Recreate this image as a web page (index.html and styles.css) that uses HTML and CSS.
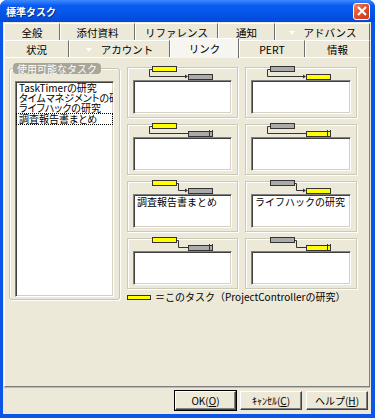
FILE: index.html
```html
<!DOCTYPE html>
<html lang="ja">
<head>
    <meta charset="UTF-8">
    <title>標準タスク</title>
    <link rel="stylesheet" href="styles.css">
</head>
<body>
<div class="window">
    <div class="titlebar">
        <span class="title">標準タスク</span>
        <span class="close-btn">
            <svg width="12" height="12" viewBox="0 0 12 12"><path d="M2 2 L10 10 M10 2 L2 10" stroke="#fff" stroke-width="2.2"/></svg>
        </span>
    </div>
    <div class="client">
        <div class="tabs">
            <div class="tab-row row1">
                <div class="tab">全般</div>
                <div class="tab">添付資料</div>
                <div class="tab">リファレンス</div>
                <div class="tab">通知</div>
                <div class="tab"><span class="mark"></span>アドバンス</div>
            </div>
            <div class="tab-row row2">
                <div class="tab">状況</div>
                <div class="tab"><span class="mark"></span>アカウント</div>
                <div class="tab selected">リンク</div>
                <div class="tab">PERT</div>
                <div class="tab">情報</div>
            </div>
        </div>

        <div class="tab-panel">
            <div class="group">
                <div class="group-label">使用可能なタスク</div>
                <div class="listbox">
                    <div class="item">TaskTimerの研究</div>
                    <div class="item">タイムマネジメントの研究</div>
                    <div class="item">ライフハックの研究</div>
                    <div class="item focus">調査報告書まとめ</div>
                </div>
            </div>

            <div class="links">
                <div class="link-grid">
                    <!-- start to start -->
                    <div class="link-box">
                        <svg class="icon" width="111" height="14" viewBox="0 0 111 14">
                            <path d="M25 3.5 H22.5 V10.5 H58" fill="none" stroke="#333"/>
                            <path d="M58 8.5 L61 10.5 L58 12.5 Z" fill="#333"/>
                            <rect x="25.5" y="0.5" width="24" height="5" class="bar-y"/>
                            <rect x="61.5" y="8.5" width="24" height="5" class="bar-g"/>
                        </svg>
                        <div class="memo"></div>
                    </div>
                    <div class="link-box">
                        <svg class="icon" width="111" height="14" viewBox="0 0 111 14">
                            <path d="M25 3.5 H22.5 V10.5 H58" fill="none" stroke="#333"/>
                            <path d="M58 8.5 L61 10.5 L58 12.5 Z" fill="#333"/>
                            <rect x="25.5" y="0.5" width="24" height="5" class="bar-g"/>
                            <rect x="61.5" y="8.5" width="24" height="5" class="bar-y"/>
                        </svg>
                        <div class="memo"></div>
                    </div>

                    <!-- start to finish -->
                    <div class="link-box">
                        <svg class="icon" width="111" height="14" viewBox="0 0 111 14">
                            <path d="M25 3.5 H22.5 V10.5 H84" fill="none" stroke="#333"/>
                            <rect x="25.5" y="0.5" width="24" height="5" class="bar-y"/>
                            <rect x="61.5" y="8.5" width="24" height="5" class="bar-g"/>
                            <path d="M82.5 7 V14 M85.5 7 V14" stroke="#333"/>
                        </svg>
                        <div class="memo"></div>
                    </div>
                    <div class="link-box">
                        <svg class="icon" width="111" height="14" viewBox="0 0 111 14">
                            <path d="M25 3.5 H22.5 V10.5 H84" fill="none" stroke="#333"/>
                            <rect x="25.5" y="0.5" width="24" height="5" class="bar-g"/>
                            <rect x="61.5" y="8.5" width="24" height="5" class="bar-y"/>
                            <path d="M82.5 7 V14 M85.5 7 V14" stroke="#333"/>
                        </svg>
                        <div class="memo"></div>
                    </div>

                    <!-- finish to start -->
                    <div class="link-box">
                        <svg class="icon" width="111" height="14" viewBox="0 0 111 14">
                            <path d="M49 3.5 H51.5 V10.5 H58" fill="none" stroke="#333"/>
                            <path d="M58 8.5 L61 10.5 L58 12.5 Z" fill="#333"/>
                            <rect x="25.5" y="0.5" width="24" height="5" class="bar-y"/>
                            <rect x="61.5" y="8.5" width="24" height="5" class="bar-g"/>
                        </svg>
                        <div class="memo">調査報告書まとめ</div>
                    </div>
                    <div class="link-box">
                        <svg class="icon" width="111" height="14" viewBox="0 0 111 14">
                            <path d="M49 3.5 H51.5 V10.5 H58" fill="none" stroke="#333"/>
                            <path d="M58 8.5 L61 10.5 L58 12.5 Z" fill="#333"/>
                            <rect x="25.5" y="0.5" width="24" height="5" class="bar-g"/>
                            <rect x="61.5" y="8.5" width="24" height="5" class="bar-y"/>
                        </svg>
                        <div class="memo">ライフハックの研究</div>
                    </div>

                    <!-- finish to finish -->
                    <div class="link-box">
                        <svg class="icon" width="111" height="14" viewBox="0 0 111 14">
                            <path d="M49 3.5 H51.5 V10.5 H84" fill="none" stroke="#333"/>
                            <rect x="25.5" y="0.5" width="24" height="5" class="bar-y"/>
                            <rect x="61.5" y="8.5" width="24" height="5" class="bar-g"/>
                            <path d="M82.5 7 V14 M85.5 7 V14" stroke="#333"/>
                        </svg>
                        <div class="memo"></div>
                    </div>
                    <div class="link-box">
                        <svg class="icon" width="111" height="14" viewBox="0 0 111 14">
                            <path d="M49 3.5 H51.5 V10.5 H84" fill="none" stroke="#333"/>
                            <rect x="25.5" y="0.5" width="24" height="5" class="bar-g"/>
                            <rect x="61.5" y="8.5" width="24" height="5" class="bar-y"/>
                            <path d="M82.5 7 V14 M85.5 7 V14" stroke="#333"/>
                        </svg>
                        <div class="memo"></div>
                    </div>
                </div>
                <div class="legend">
                    <span class="swatch"></span>
                    <span>＝このタスク（ProjectControllerの研究）</span>
                </div>
            </div>
        </div>

        <div class="buttons">
            <button type="button" class="default">OK(<u>O</u>)</button>
            <button type="button">ｷｬﾝｾﾙ(<u>C</u>)</button>
            <button type="button">ヘルプ(<u>H</u>)</button>
        </div>
    </div>
</div>
</body>
</html>
```

FILE: styles.css
```css
body {
    margin: 0;
    font-family: "Noto Sans CJK JP", "Noto Sans", sans-serif;
    font-size: 10px;
    color: #000;
}

.window {
    width: 375px;
    height: 418px;
    display: flex;
    flex-direction: column;
    background: #0b56e6;
    border-radius: 7px 7px 0 0;
    overflow: hidden;
}

.titlebar {
    height: 22px;
    flex: none;
    display: flex;
    align-items: center;
    justify-content: space-between;
    padding: 0 5px 0 6px;
    background: linear-gradient(#3d8cff, #0a5cf0 25%, #0455e8 60%, #0249d8);
    color: #fff;
}

.title {
    font-size: 10px;
    font-weight: bold;
    text-shadow: 1px 1px #0a2a8a;
}

.close-btn {
    width: 17px;
    height: 17px;
    box-sizing: border-box;
    border: 1px solid #fff;
    border-radius: 3px;
    background: linear-gradient(135deg, #f08a6a, #e0502c 45%, #c83a1c);
    display: flex;
    align-items: center;
    justify-content: center;
}

.client {
    flex: 1;
    margin: 0 4px 4px 3px;
    background: #ece9d8;
    display: flex;
    flex-direction: column;
}

/* tabs */
.tabs {
    margin: 1px 1px 0;
}

.tab-row {
    display: grid;
    height: 17px;
}

.row1 {
    grid-template-columns: 56px 75px 83px 57px 1fr;
}

.row2 {
    grid-template-columns: 65px 101px 69px 66px 1fr;
}

.tab {
    box-sizing: border-box;
    border-top: 1px solid #fff;
    border-left: 1px solid #fff;
    border-right: 1px solid #6f6f6f;
    display: flex;
    align-items: center;
    justify-content: center;
    font-size: 10.5px;
    padding-top: 1px;
}

.tab.selected {
    background: #f6f5ef;
    margin-top: -2px;
    margin-bottom: -1px;
    padding-bottom: 2px;
    position: relative;
}

.mark {
    width: 0;
    height: 0;
    border-left: 3px solid transparent;
    border-right: 3px solid transparent;
    border-top: 4px solid #fff;
    margin-right: 9px;
}

.tab-panel {
    height: 323px;
    margin: 0 1px;
    border: 1px solid;
    border-color: #fff #7f7f7f #7f7f7f #fff;
    box-shadow: 0 1px #bdbab0;
    display: flex;
    gap: 7px;
    padding: 5px 12px 0 4px;
}

/* available tasks */
.group {
    width: 111px;
    height: 232px;
    box-sizing: border-box;
    margin-top: 5px;
    border: 1px solid #c8c4b2;
    border-radius: 3px;
    box-shadow: inset 1px 1px #fff, 1px 1px #fff;
    padding: 0 5px 2px 5px;
    display: flex;
    flex-direction: column;
}

.group-label {
    align-self: flex-start;
    margin: -6px 0 0 -2px;
    padding: 0 4px;
    background: #a9a698;
    border-radius: 4px;
    color: #fff;
    line-height: 11px;
    font-size: 10px;
}

.listbox {
    flex: 1;
    margin-top: 7px;
    background: #fff;
    border: 1px solid;
    border-color: #808080 #fff #fff #808080;
    box-shadow: inset 1px 1px #404040, inset -1px -1px #d4d0c8;
    padding: 1px;
    overflow: hidden;
}

.item {
    height: 10px;
    line-height: 10px;
    padding-left: 2px;
    white-space: nowrap;
    font-feature-settings: "palt";
}

.item.focus {
    outline: 1px dotted #000;
    outline-offset: 0;
    margin-top: 1px;
}

/* link boxes */
.links {
    display: flex;
    flex-direction: column;
    margin-top: 3px;
}

.link-grid {
    display: grid;
    grid-template-columns: 111px 112px;
    grid-auto-rows: 52px;
    gap: 5px 7px;
}

.link-box {
    box-sizing: border-box;
    display: flex;
    flex-direction: column;
    margin-top: 1px;
    border: 1px solid #cdc9b8;
    box-shadow: inset 1px 1px #fff, 1px 1px #fff;
    padding: 0 5px 3px;
}

.icon {
    display: block;
    margin: -2px -6px 0;
    flex: none;
}

.bar-y {
    fill: #ffff00;
    stroke: #333;
}

.bar-g {
    fill: #aaaaaa;
    stroke: #333;
}

.memo {
    flex: 1;
    background: #fff;
    border: 1px solid;
    border-color: #808080 #fff #fff #808080;
    box-shadow: inset 1px 1px #404040, inset -1px -1px #d4d0c8;
    padding: 1px 3px;
    line-height: 12px;
}

.legend {
    display: flex;
    align-items: center;
    gap: 4px;
    margin-top: 3px;
    line-height: 10px;
}

.swatch {
    width: 24px;
    height: 5px;
    box-sizing: border-box;
    background: #ffff00;
    border: 1px solid #333;
}

/* buttons */
.buttons {
    display: flex;
    justify-content: flex-end;
    gap: 4px;
    padding: 4px 3px 0;
}

button {
    width: 62px;
    height: 19px;
    font-family: inherit;
    font-size: 10px;
    background: #ece9d8;
    border: 1px solid;
    border-color: #fff #404040 #404040 #fff;
    box-shadow: inset -1px -1px #808080;
    padding: 0;
}

button.default {
    width: 61px;
    outline: 1px solid #000;
}
```
